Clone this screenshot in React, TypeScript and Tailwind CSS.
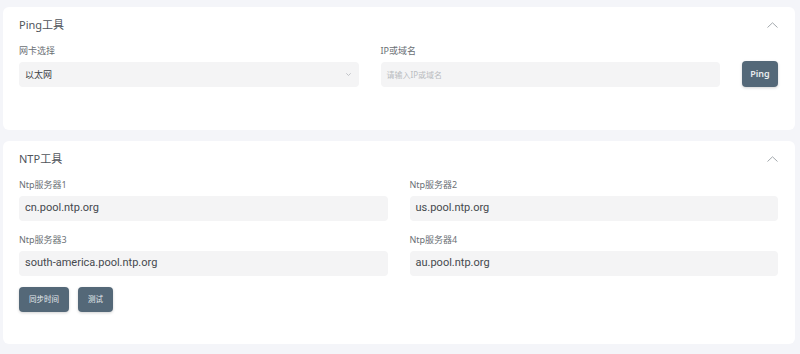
import React from 'react';

const ChevronUp = () => (
  <svg width="11" height="6" viewBox="0 0 11 6" fill="none" className="block">
    <path d="M0.5 5.5L5.5 0.8L10.5 5.5" stroke="#a3a8ad" strokeWidth="1" />
  </svg>
);

const ChevronDown = () => (
  <svg width="5" height="3" viewBox="0 0 5 3" fill="none" className="block">
    <path d="M0.3 0.3L2.5 2.5L4.7 0.3" stroke="#b5b8bc" strokeWidth="0.8" />
  </svg>
);

const CardTitle: React.FC<{ title: string }> = ({ title }) => (
  <div className="flex items-center justify-between h-5">
    <span className="text-[11px] text-[#50555b]">{title}</span>
    <ChevronUp />
  </div>
);

const Label: React.FC<{ text: string }> = ({ text }) => (
  <div className="h-4 leading-4 text-[9px] text-[#6b7075] mb-[3px]">{text}</div>
);

const Btn: React.FC<{ children: React.ReactNode; className?: string }> = ({ children, className = '' }) => (
  <button
    className={`h-[25px] rounded-[4px] bg-[#546878] text-[#e8edf0] shadow-[0_1px_3px_rgba(0,0,0,0.18)] ${className}`}
  >
    {children}
  </button>
);

const NtpField: React.FC<{ label: string; value: string }> = ({ label, value }) => (
  <div>
    <Label text={label} />
    <div className="h-[25px] rounded-[4px] bg-[#f4f4f5] flex items-center px-[6px] text-[11px] text-[#45494e] font-['Roboto','Liberation_Sans',sans-serif]">
      {value}
    </div>
  </div>
);

export default function App() {
  const servers = [
    { label: 'Ntp服务器1', value: 'cn.pool.ntp.org' },
    { label: 'Ntp服务器2', value: 'us.pool.ntp.org' },
    { label: 'Ntp服务器3', value: 'south-america.pool.ntp.org' },
    { label: 'Ntp服务器4', value: 'au.pool.ntp.org' },
  ];

  return (
    <div className="w-[800px] h-[354px] bg-[#f4f5f9] pt-[7px] pl-[3px] pr-[5px] font-['Noto_Sans','Noto_Sans_CJK_SC',sans-serif]">
      {/* Ping */}
      <div className="bg-white rounded-[6px] h-[123px] pt-2 px-4 pr-[17px]">
        <CardTitle title="Ping工具" />
        <div className="flex items-end gap-[22px] mt-2">
          <div className="flex-1">
            <Label text="网卡选择" />
            <div className="h-[25px] rounded-[4px] bg-[#f4f4f5] flex items-center justify-between px-[6px] pr-[8px]">
              <span className="text-[9px] text-[#3c4045]">以太网</span>
              <ChevronDown />
            </div>
          </div>
          <div className="flex-1">
            <Label text="IP或域名" />
            <div className="h-[25px] rounded-[4px] bg-[#f4f4f5] flex items-center px-[6px]">
              <span className="text-[8px] text-[#b9bcc0]">请输入IP或域名</span>
            </div>
          </div>
          <Btn className="w-9 h-[26px] text-[9px] font-semibold">Ping</Btn>
        </div>
      </div>

      {/* NTP */}
      <div className="bg-white rounded-[6px] h-[203px] mt-[11px] pt-2 px-4 pr-[17px]">
        <CardTitle title="NTP工具" />
        <div className="grid grid-cols-2 gap-x-[22px] gap-y-[11px] mt-2">
          {servers.map((s) => (
            <NtpField key={s.label} label={s.label} value={s.value} />
          ))}
        </div>
        <div className="flex gap-[9px] mt-[11px]">
          <Btn className="px-[10px] text-[7.5px]">同步时间</Btn>
          <Btn className="px-[10px] text-[7.5px]">测试</Btn>
        </div>
      </div>
    </div>
  );
}
